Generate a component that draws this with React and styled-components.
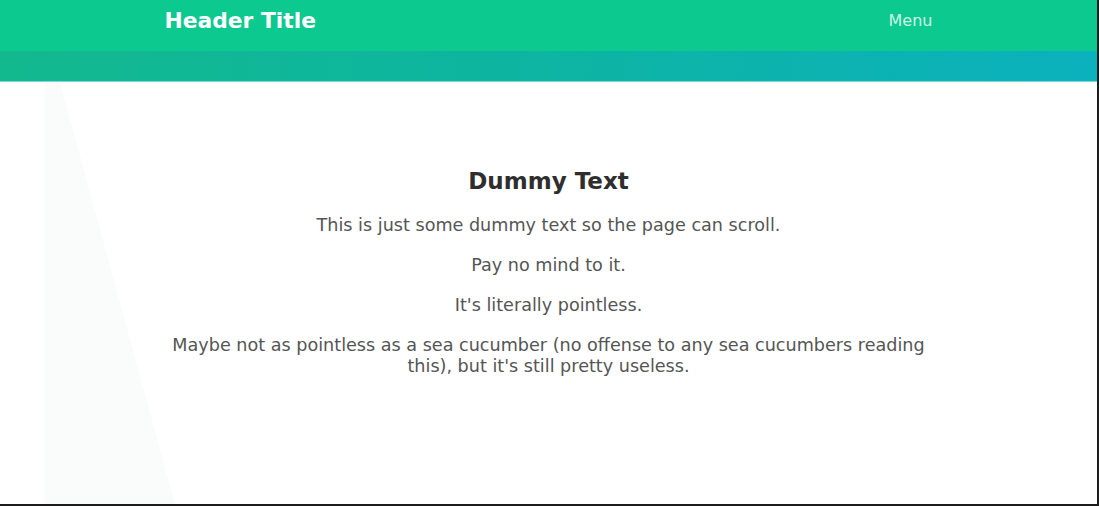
import React from "react";
import styled, { createGlobalStyle } from "styled-components";

const Global = createGlobalStyle`
  html, body { margin: 0; padding: 0; background: #ffffff; }
  body { font-family: "DejaVu Sans", "Open Sans", sans-serif; }
  * { box-sizing: border-box; }
`;

const Page = styled.div`
  position: relative;
  height: 506px;
  border-right: 2px solid #1c1c1c;
  border-bottom: 2px solid #1c1c1c;
  overflow: hidden;
  background: #ffffff;
  display: flex;
  flex-direction: column;
`;

const Shade = styled.div`
  position: absolute;
  left: 45px;
  top: 82px;
  width: 140px;
  bottom: 0;
  background: #fafcfc;
  clip-path: polygon(0 0, 15px 0, 130px 100%, 0 100%);
  pointer-events: none;
`;

const Header = styled.header`
  height: 51px;
  background: #0bc98f;
`;

const HeaderInner = styled.div`
  width: 768px;
  margin: 0 auto;
  height: 100%;
  display: flex;
  align-items: center;
  justify-content: space-between;
  padding-bottom: 10px;
`;

const Title = styled.h1`
  margin: 0;
  font-size: 21.8px;
  font-weight: 700;
  color: #ffffff;
`;

const Menu = styled.span`
  font-size: 16px;
  color: rgba(255, 255, 255, 0.8);
`;

const Strip = styled.div`
  height: 31px;
  background: linear-gradient(100deg, #12b98e 0%, #0db5a0 45%, #0bb1bd 100%);
  border-bottom: 1px solid #7fd9d6;
`;

const Main = styled.main`
  position: relative;
  width: 768px;
  margin: 0 auto;
  padding-top: 84px;
  text-align: center;
`;

const Heading = styled.h2`
  margin: 0 0 19px;
  font-size: 23px;
  font-weight: 700;
  color: #2e2e2e;
  line-height: 30px;
`;

const Para = styled.p`
  margin: 0 0 19px;
  font-size: 17.6px;
  line-height: 21px;
  color: #555555;
`;

export default function App() {
  return (
    <>
      <Global />
      <Page>
        <Shade />
        <Header>
          <HeaderInner>
            <Title>Header Title</Title>
            <Menu>Menu</Menu>
          </HeaderInner>
        </Header>
        <Strip />
        <Main>
          <Heading>Dummy Text</Heading>
          <Para>This is just some dummy text so the page can scroll.</Para>
          <Para>Pay no mind to it.</Para>
          <Para>It's literally pointless.</Para>
          <Para>
            Maybe not as pointless as a sea cucumber (no offense to any sea
            cucumbers reading this), but it's still pretty useless.
          </Para>
        </Main>
      </Page>
    </>
  );
}
